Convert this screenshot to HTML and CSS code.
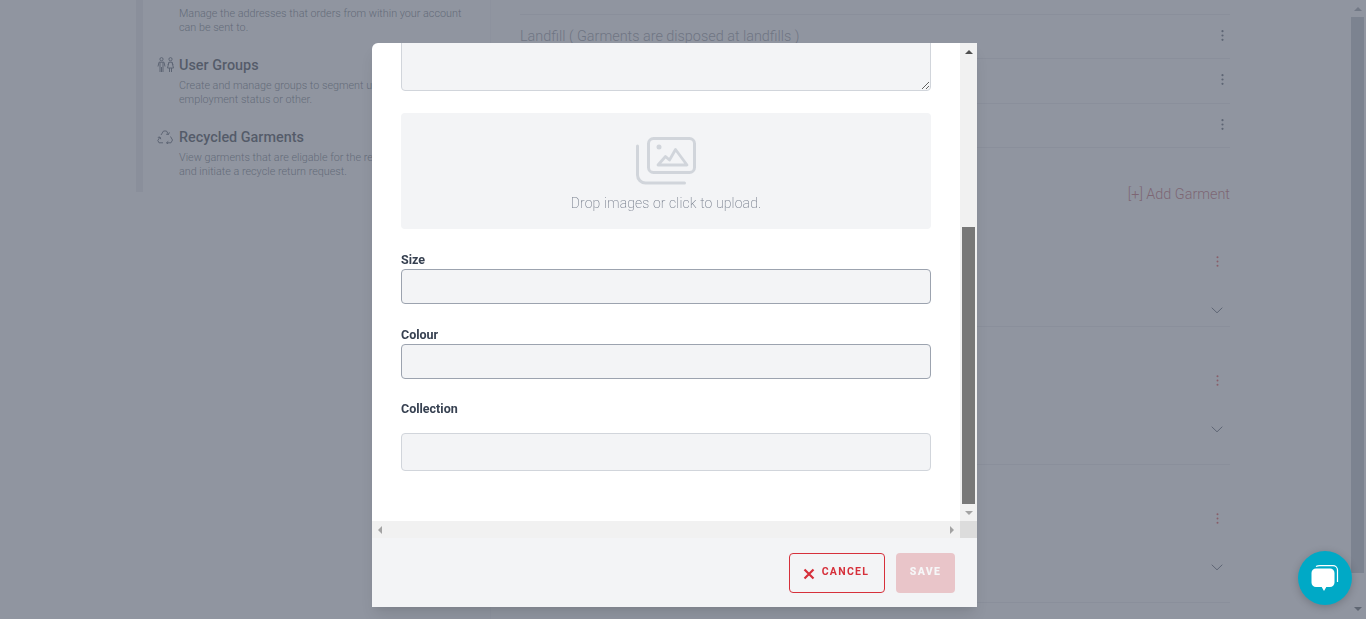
FILE: index.html
```html
<!DOCTYPE html>
<html lang="en">
<head>
<meta charset="utf-8">
<title>Garments</title>
<link rel="stylesheet" href="styles.css">
</head>
<body>
<div class="page">
  <aside class="side">
    <div class="side-item first">
      <p class="side-text">Manage the addresses that orders from within your account<br>can be sent to.</p>
    </div>
    <div class="side-item">
      <h3 class="side-title">
        <svg class="side-icon" viewBox="0 0 18 16" fill="none" stroke="currentColor" stroke-width="1"><circle cx="4.500" cy="2.200" r="1.600"/><path d="M1 9.500 2 5.200h5l1 4.300M3 5.200V15M6 5.200V15M4.500 10v5"/><circle cx="13.500" cy="2.200" r="1.600"/><path d="M11 8l1-2.800h3L16 8M12 5.200 10.500 11h6L15 5.200M12.500 11v4M14.500 11v4"/></svg>
        User Groups
      </h3>
      <p class="side-text">Create and manage groups to segment users by<br>employment status or other.</p>
    </div>
    <div class="side-item">
      <h3 class="side-title">
        <svg class="side-icon recycle" viewBox="0 0 16 14" fill="none" stroke="currentColor" stroke-width="1"><path d="M4 5 6.500 1h3l2 3.500M11.500 4.500 9.100 4.200M11.500 4.500l.9-2.200M13.500 6.500l2 3.500-1.500 2.800H9.500M9.500 12.800l1.800-1.500M9.500 12.800l1.800 1.200M6 12.800H2L.8 10.500 3 7M3 7l-2.200.4M3 7l.8 2.200"/></svg>
        Recycled Garments
      </h3>
      <p class="side-text">View garments that are eligable for the recycling programme<br>and initiate a recycle return request.</p>
    </div>
  </aside>
  <main class="main">
    <div class="row"><span>Landfill ( Garments are disposed at landfills )</span><svg class="kebab" viewBox="0 0 3 11"><circle cx="1.500" cy="1.200" r="1.100"/><circle cx="1.500" cy="5.500" r="1.100"/><circle cx="1.500" cy="9.800" r="1.100"/></svg></div>
    <div class="row"><span></span><svg class="kebab" viewBox="0 0 3 11"><circle cx="1.500" cy="1.200" r="1.100"/><circle cx="1.500" cy="5.500" r="1.100"/><circle cx="1.500" cy="9.800" r="1.100"/></svg></div>
    <div class="row last"><span></span><svg class="kebab" viewBox="0 0 3 11"><circle cx="1.500" cy="1.200" r="1.100"/><circle cx="1.500" cy="5.500" r="1.100"/><circle cx="1.500" cy="9.800" r="1.100"/></svg></div>
    <div class="add">[+] Add Garment</div>
    <div class="garment short">
      <svg class="kebab red" viewBox="0 0 3 11"><circle cx="1.500" cy="1.200" r="1"/><circle cx="1.500" cy="5.500" r="1"/><circle cx="1.500" cy="9.800" r="1"/></svg>
      <svg class="chev" viewBox="0 0 12 7"><path d="M.7.7 6 5.800 11.300.7"/></svg>
    </div>
    <div class="garment">
      <svg class="kebab red" viewBox="0 0 3 11"><circle cx="1.500" cy="1.200" r="1"/><circle cx="1.500" cy="5.500" r="1"/><circle cx="1.500" cy="9.800" r="1"/></svg>
      <svg class="chev" viewBox="0 0 12 7"><path d="M.7.7 6 5.800 11.300.7"/></svg>
    </div>
    <div class="garment">
      <svg class="kebab red" viewBox="0 0 3 11"><circle cx="1.500" cy="1.200" r="1"/><circle cx="1.500" cy="5.500" r="1"/><circle cx="1.500" cy="9.800" r="1"/></svg>
      <svg class="chev" viewBox="0 0 12 7"><path d="M.7.7 6 5.800 11.300.7"/></svg>
    </div>
  </main>
</div>

<div class="overlay"></div>

<div class="page-scroll">
  <span class="arrow up"></span>
  <div class="page-thumb"></div>
  <span class="arrow down"></span>
</div>

<div class="modal">
  <div class="modal-top">
    <form class="form">
      <textarea class="area" aria-label="Description"></textarea>
      <div class="drop">
        <svg class="drop-icon" viewBox="0 0 60 48" fill="none" stroke="currentColor" stroke-width="3" stroke-linecap="round" stroke-linejoin="round">
          <path d="M1.500 9v29a8 8 0 0 0 8 8h39"/>
          <rect x="12.500" y="1.500" width="46" height="34" rx="5"/>
          <circle cx="23" cy="10" r="2.500" fill="currentColor" stroke="none"/>
          <path d="M22 28l7.500-8.500 4 3.500 6-10.500L51 28z" stroke-width="2.800"/>
        </svg>
        <p class="drop-text">Drop images or click to upload.</p>
      </div>
      <label class="label l-size">Size</label>
      <div class="input"></div>
      <label class="label l-colour">Colour</label>
      <div class="input"></div>
      <label class="label l-coll">Collection</label>
      <div class="input light"></div>
    </form>
    <div class="vbar">
      <span class="arrow up dark"></span>
      <div class="vtrack"><div class="vthumb"></div></div>
      <span class="arrow down"></span>
    </div>
  </div>
  <div class="hbar">
    <div class="htrack"><span class="arrow left"></span><span class="arrow right"></span></div>
    <div class="corner"></div>
  </div>
  <div class="foot">
    <button class="btn cancel" type="button">
      <svg class="x" viewBox="0 0 12 12"><path d="M1.500 1.500 10.500 10.500M10.500 1.500 1.500 10.500"/></svg>
      CANCEL
    </button>
    <button class="btn save" type="button">SAVE</button>
  </div>
</div>

<div class="chat">
  <svg viewBox="0 0 28 28" class="chat-icon">
    <path d="M5 1.600Q6.500.6 9 .6h13a4.500 4.500 0 0 1 4.500 4.500V17" fill="none" stroke="#fff" stroke-width="1.200"/>
    <path d="M5 3.500h14a4.500 4.500 0 0 1 4.500 4.500v9.500a4.500 4.500 0 0 1-4.500 4.500h-3.700L13 26l-2.300-4H5a4.500 4.500 0 0 1-4.500-4.500V8A4.500 4.500 0 0 1 5 3.500z" fill="#fff"/>
  </svg>
</div>
</body>
</html>
```
FILE: styles.css
```css
* { box-sizing: border-box; }
html, body { margin: 0; height: 100%; overflow: hidden; }
body { font-family: Roboto, "Liberation Sans", sans-serif; background: #fff; color: #374151; }

.page { display: flex; height: 619px; padding-left: 136px; }
.side { flex: none; width: 354px; height: 192px; border-left: 7px solid #e5e7eb; padding-left: 36px; }
.main { flex: none; width: 740px; height: 619px; border-left: 1px solid #f3f4f6; padding: 14px 0 0 29px; }
.side-item { margin-bottom: 21px; }
.side-item.first { padding-top: 7px; }
.side-title { margin: 0 0 3px; font-size: 14.400px; font-weight: 500; line-height: 20px; position: relative; color: #111827; }
.side-icon { position: absolute; left: -22px; top: 1px; width: 18px; height: 16px; color: #374151; }
.side-icon.recycle { top: 2px; width: 16px; height: 14px; }
.side-text { margin: 0; font-size: 10.800px; font-weight: 300; line-height: 14px; color: #4b5563; white-space: nowrap; }

.row { display: flex; justify-content: space-between; align-items: center; height: 44.330px; border-top: 1px solid #e5e7eb; font-size: 14.400px; font-weight: 300; color: #7a808c; padding: 0 6px 0 0; }
.row.last { height: 45.330px; border-bottom: 1px solid #e5e7eb; }
.row .kebab { margin-bottom: 2px; }
.kebab { flex: none; width: 3px; height: 11px; fill: #374151; }
.kebab.red { fill: #dc2626; }
.add { text-align: right; font-size: 14.400px; font-weight: 300; color: #b4454f; margin-top: 37px; line-height: 20px; height: 22px; }
.garment { position: relative; height: 138px; border-bottom: 1px solid #e5e7eb; }
.garment.short { height: 120px; }
.garment .kebab { position: absolute; right: 11px; top: 48px; }
.garment .chev { position: absolute; right: 7px; top: 99px; width: 12px; height: 7px; fill: none; stroke: #374151; stroke-width: 1; }
.garment.short .kebab { top: 49px; }
.garment.short .chev { top: 100px; }

.overlay { position: fixed; inset: 0; background: rgba(107, 114, 128, .75); backdrop-filter: blur(.4px); }

.page-scroll { position: fixed; left: 1351px; top: 0; width: 13px; height: 619px; display: flex; flex-direction: column; align-items: center; }
.page-thumb { flex: none; width: 13px; height: 556px; background: #7c8390; }
.page-scroll .arrow.up::before { border-bottom-color: #727986; }
.page-scroll .arrow.down::before { border-top-color: #5f6672; }
.page-scroll .arrow.down { height: 46px; align-items: flex-end; padding-bottom: 8px; }

.modal { position: fixed; left: 372px; top: 43px; width: 605px; height: 564px; display: flex; flex-direction: column; background: #fff; border-radius: 6px 0 0 0; box-shadow: 0 10px 15px -3px rgba(0,0,0,.1), 0 4px 6px -2px rgba(0,0,0,.05); overflow: hidden; }
.modal-top { display: flex; flex: none; height: 478px; }
.form { flex: none; width: 588px; padding: 0 29px; overflow: hidden; }
.area { display: block; width: 530px; height: 58px; margin: -10px 0 0; background: #f3f4f6; border: 1px solid #d1d5db; border-radius: 4px; padding: 0; outline: 0; }
.drop { height: 116px; margin-top: 22px; background: #f3f4f6; border-radius: 4px; display: flex; flex-direction: column; align-items: center; padding-top: 24px; }
.drop-icon { width: 60px; height: 48px; color: #d1d5db; }
.drop-text { margin: 10px 0 0; font-size: 14px; font-weight: 200; letter-spacing: .12px; line-height: 16px; color: #7b8290; }
.label { display: block; font-size: 12.500px; font-weight: 700; line-height: 15px; color: #374151; }
.l-size { margin-top: 23px; margin-bottom: 2px; }
.l-colour { margin-top: 23px; margin-bottom: 2px; }
.l-coll { margin-top: 22px; margin-bottom: 17px; }
.input { height: 35px; background: #f3f4f6; border: 1px solid #9ca3af; border-radius: 4px; }
.input.light { height: 38px; border-color: #d1d5db; }

.vbar { flex: none; width: 17px; background: #f1f1f1; display: flex; flex-direction: column; }
.vtrack { flex: 1; padding: 167px 2px 0; }
.vthumb { height: 277px; background: #787878; }
.arrow { display: flex; justify-content: center; align-items: center; flex: none; height: 17px; }
.arrow::before { content: ""; width: 0; height: 0; border: 4px solid transparent; }
.arrow.up::before { border-top: 0; border-bottom: 4px solid #a3a3a3; }
.arrow.up.dark::before { border-bottom-color: #505050; }
.arrow.down::before { border-bottom: 0; border-top: 4px solid #a3a3a3; }
.arrow.left::before { border-left: 0; border-right: 4px solid #a3a3a3; }
.arrow.right::before { border-right: 0; border-left: 4px solid #a3a3a3; }

.hbar { display: flex; flex: none; height: 17px; }
.htrack { flex: 1; background: #f1f1f1; display: flex; justify-content: space-between; }
.htrack .arrow { width: 16px; }
.corner { width: 17px; background: #dcdcdc; }

.foot { flex: 1; background: #f3f4f6; display: flex; justify-content: flex-end; align-items: flex-start; gap: 11px; padding: 15px 22px 0 0; }
.btn { height: 40px; border-radius: 4px; font-family: Roboto, "Liberation Sans", sans-serif; font-size: 10.500px; font-weight: 700; letter-spacing: 1.300px; padding: 0; }
.cancel { width: 96px; background: transparent; border: 1px solid #d6303b; color: #d6303b; display: flex; align-items: center; justify-content: center; gap: 7px; padding: 0 2px 3px 0; }
.x { width: 12px; height: 12px; fill: none; stroke: #d6303b; stroke-width: 2.200; margin-top: 4px; }
.save { width: 59px; background: #e9c5c9; border: 0; color: #f6f7f8; font-weight: 900; padding-bottom: 3px; }

.chat { position: fixed; left: 1298px; top: 551px; width: 54px; height: 54px; border-radius: 50%; background: #00a9c6; box-shadow: 0 2px 8px rgba(0,0,0,.2); display: flex; align-items: center; justify-content: center; }
.chat-icon { width: 28px; height: 28px; margin-top: 1px; }
```
